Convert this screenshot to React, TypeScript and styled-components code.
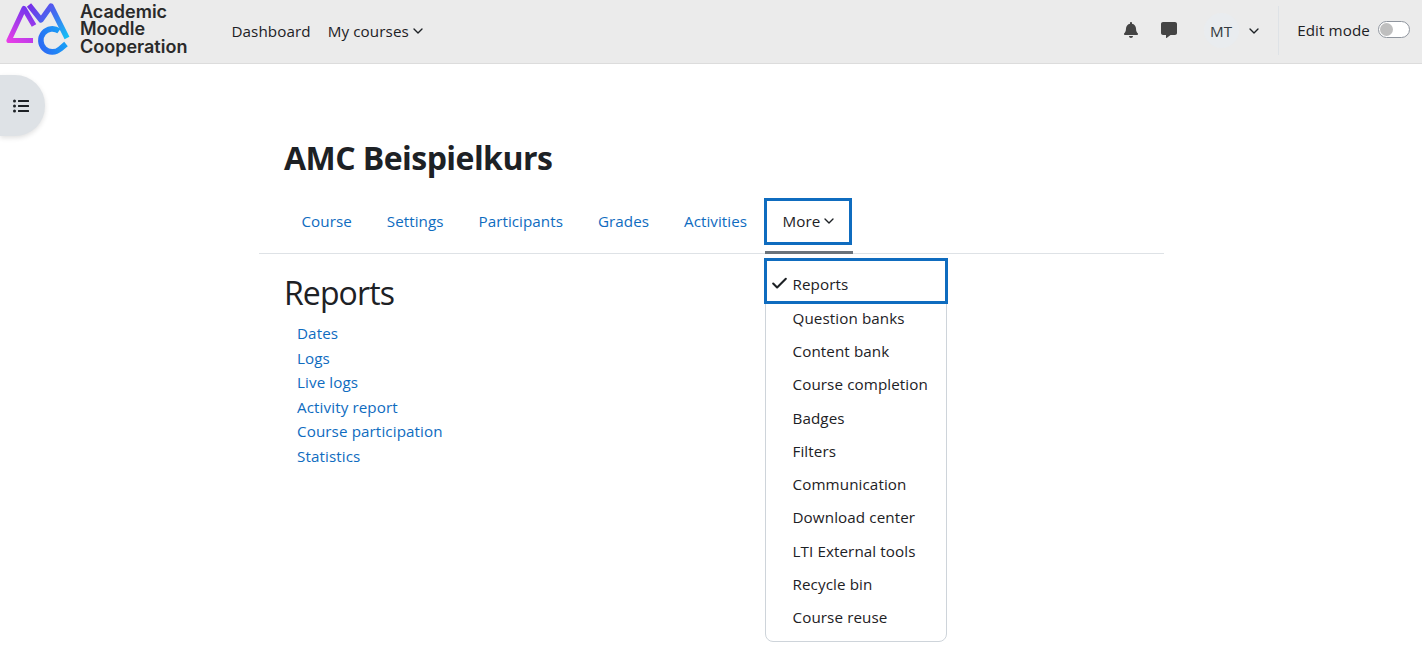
import { createGlobalStyle, styled } from "styled-components";
import { FaBell, FaCommentAlt, FaListUl } from "react-icons/fa";
import { Check, ChevronDown } from "lucide-react";

const GlobalStyle = createGlobalStyle`
  html, body {
    margin: 0;
    background: #fff;
    color: #1d2125;
    font-family: "Open Sans", "Noto Sans", sans-serif;
    font-size: 15.2px;
    letter-spacing: 0.1px;
    overflow: hidden;
  }
`;

const Page = styled.div`
  position: relative;
  height: 653px;
`;

const Navbar = styled.header`
  height: 61px;
  padding-bottom: 2px;
  display: flex;
  align-items: center;
  background: #ebebeb;
  border-bottom: 1px solid #dcdcdc;
`;

const Brand = styled.a`
  display: flex;
  align-items: center;
  gap: 9px;
  margin-left: 5px;
  margin-right: 44px;
`;

const BrandText = styled.div`
  font-family: Inter, sans-serif;
  font-weight: 600;
  font-size: 18px;
  line-height: 17.5px;
  letter-spacing: 0;
  color: #2a2a2a;
  margin-top: -3px;
`;

const NavItem = styled.a`
  display: flex;
  align-items: center;
  gap: 1px;
  margin-right: 17px;
  color: #1d2125;
`;

const NavRight = styled.div`
  margin-left: auto;
  display: flex;
  align-items: center;
  height: 100%;
`;

const IconButton = styled.span<{ $gap: number }>`
  display: flex;
  color: #444;
  margin-top: -2px;
  margin-right: ${(p) => p.$gap}px;
`;

const Avatar = styled.span`
  width: 35px;
  height: 35px;
  border-radius: 50%;
  background: #e9ecef;
  display: flex;
  align-items: center;
  justify-content: center;
  color: #343a40;
  margin-right: 7.5px;
`;

const Divider = styled.span`
  width: 1px;
  height: 49px;
  background: #dee2e6;
  margin: 0 18px 0 16px;
`;

const EditLabel = styled.span`
  margin-right: 8px;
  margin-top: -1px;
`;

const Switch = styled.span`
  width: 32px;
  height: 17px;
  box-sizing: border-box;
  border: 1px solid #8f959e;
  border-radius: 10px;
  background: #fff;
  display: flex;
  align-items: center;
  padding-left: 1px;
  margin-right: 12px;
  margin-top: -3px;
`;

const Knob = styled.span`
  width: 13px;
  height: 13px;
  border-radius: 50%;
  background: #bfbfbf;
`;

const DrawerToggle = styled.button`
  position: absolute;
  left: 0;
  top: 75px;
  width: 45px;
  height: 61px;
  border: 0;
  padding: 0 8px 0 4px;
  border-radius: 0 30px 30px 0;
  background: #dee2e6;
  box-shadow: 0 2px 5px rgba(0, 0, 0, 0.12);
  color: #1d2125;
  display: flex;
  align-items: center;
  justify-content: center;
`;

const Main = styled.main`
  width: 905px;
  margin-left: 259px;
`;

const CourseTitle = styled.h1`
  margin: 0;
  padding: 72px 25px 0;
  font-size: 32px;
  line-height: 44px;
  font-weight: 700;
  letter-spacing: -0.55px;
`;

const Tabs = styled.nav`
  position: relative;
  margin-top: 18px;
  height: 55px;
  padding-left: 25px;
  display: flex;
  align-items: flex-start;
  border-bottom: 1px solid #dee2e6;
  letter-spacing: 0.05px;
`;

const Tab = styled.a`
  height: 47px;
  box-sizing: border-box;
  padding: 0 17.5px 2px;
  display: flex;
  align-items: center;
  color: #0f6cbf;
`;

const MoreTab = styled(Tab)`
  margin-left: -1px;
  padding: 0 12px 2px 16px;
  gap: 1px;
  color: #1d2125;
  border: 3px solid #0f6cbf;
`;

const ActiveBar = styled.span`
  position: absolute;
  left: 506px;
  bottom: -1px;
  width: 88px;
  height: 3px;
  background: #6a737b;
`;

const Menu = styled.div`
  position: absolute;
  left: 506px;
  top: 60px;
  width: 182px;
  box-sizing: border-box;
  height: 384px;
  background: #fff;
  border: 1px solid #ced4da;
  border-radius: 0 0 8px 8px;
  z-index: 2;
  letter-spacing: 0.1px;
`;

const MenuItem = styled.a`
  display: flex;
  align-items: center;
  box-sizing: border-box;
  height: 33.3px;
  padding-left: 26.5px;
  color: #1d2125;
`;

const ActiveMenuItem = styled(MenuItem)`
  position: relative;
  height: 46px;
  margin: -1px -2px -3px;
  padding: 5px 0 0 25.5px;
  border: 3px solid #0f6cbf;
`;

const CheckMark = styled.span`
  position: absolute;
  left: 3px;
  display: flex;
`;

const Section = styled.section`
  padding: 17px 25px 0;
`;

const Heading = styled.h2`
  margin: 0 0 6px;
  font-size: 32px;
  line-height: 44px;
  font-weight: 400;
  letter-spacing: -0.9px;
`;

const LinkList = styled.ul`
  list-style: none;
  margin: 0;
  padding: 0 0 0 13px;
`;

const ReportLink = styled.li`
  height: 24.5px;
  line-height: 24.5px;
  color: #0f6cbf;
`;

const Logo = () => (
  <svg width="66" height="61" viewBox="5 0 66 61" fill="none">
    <defs>
      <linearGradient id="tri" x1="6" y1="44" x2="30" y2="6" gradientUnits="userSpaceOnUse">
        <stop offset="0" stopColor="#f23fe6" />
        <stop offset="1" stopColor="#6a35ee" />
      </linearGradient>
      <linearGradient id="em" x1="30" y1="5" x2="68" y2="38" gradientUnits="userSpaceOnUse">
        <stop offset="0" stopColor="#7a2fe8" />
        <stop offset="0.5" stopColor="#3f6ff0" />
        <stop offset="1" stopColor="#12c4f5" />
      </linearGradient>
      <linearGradient id="cee" x1="38" y1="50" x2="68" y2="38" gradientUnits="userSpaceOnUse">
        <stop offset="0" stopColor="#2f62f4" />
        <stop offset="1" stopColor="#14a8f6" />
      </linearGradient>
    </defs>
    <path d="M33 40.5H9L24 8.5l10 17" stroke="url(#tri)" strokeWidth="5.2" strokeLinejoin="round" />
    <path d="M29 5l12 15 10-14 16 32" stroke="url(#em)" strokeWidth="5.4" strokeLinejoin="round" />
    <path d="M59 31a11.5 11.5 0 1 0 1 18l6-5" stroke="url(#cee)" strokeWidth="5.6" />
  </svg>
);

const Chevron = () => <ChevronDown size={16} strokeWidth={2} />;

export default function App() {
  const reports = ["Dates", "Logs", "Live logs", "Activity report", "Course participation", "Statistics"];
  const menu = [
    "Question banks",
    "Content bank",
    "Course completion",
    "Badges",
    "Filters",
    "Communication",
    "Download center",
    "LTI External tools",
    "Recycle bin",
    "Course reuse",
  ];

  return (
    <Page>
      <GlobalStyle />
      <Navbar>
        <Brand>
          <Logo />
          <BrandText>
            Academic
            <br />
            Moodle
            <br />
            Cooperation
          </BrandText>
        </Brand>
        <NavItem>Dashboard</NavItem>
        <NavItem>
          My courses <Chevron />
        </NavItem>
        <NavRight>
          <IconButton $gap={22}>
            <FaBell size={16} />
          </IconButton>
          <IconButton $gap={27}>
            <FaCommentAlt size={16} />
          </IconButton>
          <Avatar>MT</Avatar>
          <Chevron />
          <Divider />
          <EditLabel>Edit mode</EditLabel>
          <Switch>
            <Knob />
          </Switch>
        </NavRight>
      </Navbar>

      <DrawerToggle aria-label="Open course index">
        <FaListUl size={16} />
      </DrawerToggle>

      <Main>
        <CourseTitle>AMC Beispielkurs</CourseTitle>
        <Tabs>
          <Tab>Course</Tab>
          <Tab>Settings</Tab>
          <Tab>Participants</Tab>
          <Tab>Grades</Tab>
          <Tab>Activities</Tab>
          <MoreTab>
            More <Chevron />
          </MoreTab>
          <ActiveBar />
          <Menu>
            <ActiveMenuItem>
              <CheckMark>
                <Check size={19} strokeWidth={2.6} />
              </CheckMark>
              Reports
            </ActiveMenuItem>
            {menu.map((item) => (
              <MenuItem key={item}>{item}</MenuItem>
            ))}
          </Menu>
        </Tabs>
        <Section>
          <Heading>Reports</Heading>
          <LinkList>
            {reports.map((r) => (
              <ReportLink key={r}>{r}</ReportLink>
            ))}
          </LinkList>
        </Section>
      </Main>
    </Page>
  );
}
